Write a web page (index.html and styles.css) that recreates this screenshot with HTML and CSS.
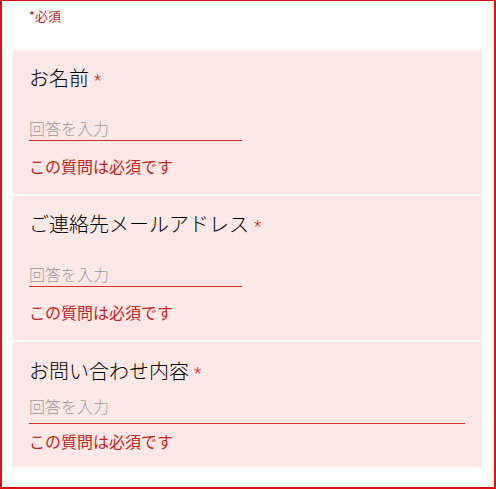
FILE: index.html
```html
<!DOCTYPE html>
<html lang="ja">
<head>
<meta charset="utf-8">
<link rel="stylesheet" href="styles.css">
</head>
<body>
<div class="frame">
  <div class="required-note">*必須</div>
  <div class="cards">
    <div class="card">
      <div class="title">お名前<span class="star">*</span></div>
      <div class="input short">回答を入力</div>
      <div class="error">この質問は必須です</div>
    </div>
    <div class="card">
      <div class="title">ご連絡先メールアドレス<span class="star">*</span></div>
      <div class="input short">回答を入力</div>
      <div class="error">この質問は必須です</div>
    </div>
    <div class="card card-long">
      <div class="title">お問い合わせ内容<span class="star">*</span></div>
      <div class="input long">回答を入力</div>
      <div class="error">この質問は必須です</div>
    </div>
  </div>
</div>
</body>
</html>
```

FILE: styles.css
```css
html, body {
  margin: 0;
  padding: 0;
  background: #ffffff;
}
body {
  font-family: "Noto Sans CJK JP", "Noto Sans", sans-serif;
  font-weight: 300;
}
.frame {
  box-sizing: border-box;
  width: 496px;
  height: 489px;
  border: 2px solid #dd1111;
  border-top-width: 1px;
  padding: 0 12px 0 10px;
}
.required-note {
  font-size: 13px;
  line-height: 16px;
  color: #b3261e;
  font-weight: 400;
  padding: 7px 0 0 17px;
  margin-bottom: 26px;
}
.cards {
  display: flex;
  flex-direction: column;
  gap: 2px;
}
.card {
  background: #fce8e6;
  padding: 16px 17px 18px;
  display: flex;
  flex-direction: column;
  align-items: flex-start;
}
.title {
  font-size: 20px;
  line-height: 24px;
  height: 24px;
  color: #000000;
}
.star {
  color: #c5221f;
  margin-left: 5px;
  font-family: "Roboto", "Liberation Sans", sans-serif;
  font-size: 17px;
  line-height: 1;
}
.input {
  font-size: 16px;
  line-height: 24px;
  height: 24px;
  color: #9e9a9a;
  border-bottom: 1px solid #d93025;
  margin-top: 26px;
}
.input.short {
  width: 213px;
}
.error {
  font-size: 16px;
  line-height: 20px;
  height: 20px;
  color: #c0261f;
  font-weight: 400;
  margin-top: 15px;
}
.card-long {
  padding: 17px 17px 16px;
  align-items: stretch;
}
.card-long .input {
  margin-top: 11px;
  padding-bottom: 5px;
}
.card-long .error {
  margin-top: 7px;
}
```
